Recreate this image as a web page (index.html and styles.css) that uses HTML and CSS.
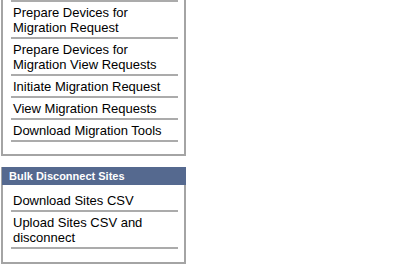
FILE: index.html
```html
<!DOCTYPE html>
<html lang="en">
<head>
    <meta charset="UTF-8">
    <title>Migration Menu</title>
    <link rel="stylesheet" href="styles.css">
</head>
<body>
    <div class="sidebar">
        <div class="panel cut">
            <ul class="menu">
                <li class="first"><a href="#">Prepare Devices for Migration Request</a></li>
                <li><a href="#">Prepare Devices for Migration View Requests</a></li>
                <li><a href="#">Initiate Migration Request</a></li>
                <li><a href="#">View Migration Requests</a></li>
                <li><a href="#">Download Migration Tools</a></li>
            </ul>
        </div>

        <div class="panel">
            <div class="panel-title">Bulk Disconnect Sites</div>
            <ul class="menu">
                <li><a href="#">Download Sites CSV</a></li>
                <li><a href="#">Upload Sites CSV and disconnect</a></li>
            </ul>
        </div>
    </div>
</body>
</html>
```

FILE: styles.css
```css
body {
    margin: 0;
    padding: 0;
    background-color: #fff;
    font-family: "Liberation Sans", Arial, sans-serif;
}

.sidebar {
    display: flex;
    flex-direction: column;
    gap: 11px;
    width: 185px;
    padding-left: 1px;
}

.panel {
    border: 2px solid #a4a4a4;
    border-top: none;
    padding-bottom: 13px;
}

/* top of this panel is scrolled out of view */
.panel.cut {
    padding-bottom: 12px;
}

.panel-title {
    background-color: #55698f;
    color: #fff;
    font-size: 11px;
    font-weight: bold;
    line-height: 18px;
    padding-left: 7px;
    margin: 0 -2px 5px -1px;
}

.menu {
    list-style: none;
    margin: 0 6px 0 8px;
    padding: 0;
}

.menu li {
    border-bottom: 2px solid #ababab;
    padding: 3px 0 2px 2px;
    font-size: 13px;
    line-height: 15px;
}

.menu li.first {
    border-top: 2px solid #ababab;
}

.menu a {
    color: #000;
    text-decoration: none;
}
```
